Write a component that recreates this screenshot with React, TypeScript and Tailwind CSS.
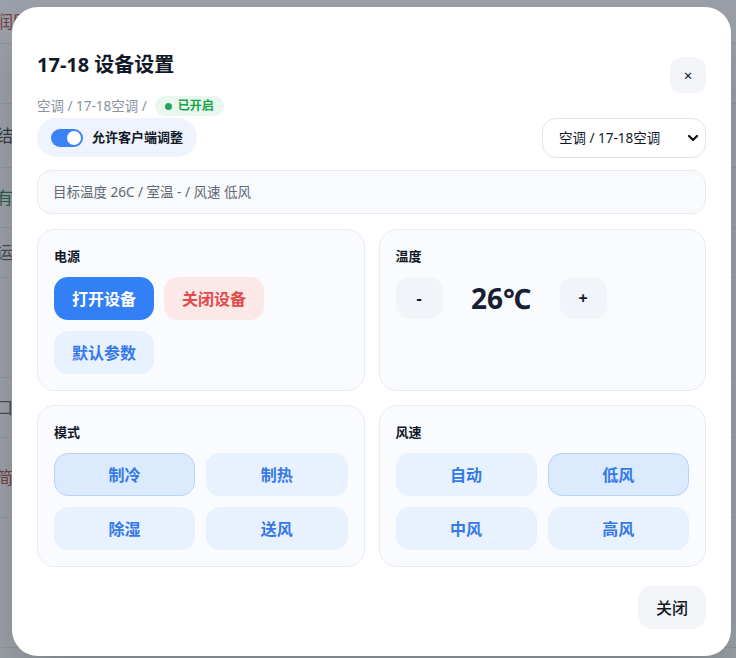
import React, { useState } from 'react';

const modes = ['制冷', '制热', '除湿', '送风'];
const speeds = ['自动', '低风', '中风', '高风'];

const bgRows = [
  { text: '润所', color: 'text-[#b23a3a]', h: 'h-[44px]' },
  { text: '', color: '', h: 'h-[60px]' },
  { text: '结果', color: 'text-[#333]', h: 'h-[64px]' },
  { text: '有人', color: 'text-[#1f7a4a]', h: 'h-[60px]' },
  { text: '运行', color: 'text-[#555]', h: 'h-[50px]' },
  { text: '', color: '', h: 'h-[100px]' },
  { text: '口容', color: 'text-[#555]', h: 'h-[60px]' },
  { text: '简', color: 'text-[#b23a3a]', h: 'h-[80px]' },
  { text: '', color: '', h: 'h-[130px]' },
];

const App: React.FC = () => {
  const [allowClient, setAllowClient] = useState(true);
  const [mode, setMode] = useState('制冷');
  const [speed, setSpeed] = useState('低风');
  const [temp, setTemp] = useState(26);

  return (
    <div className="relative w-[736px] h-[658px] overflow-hidden bg-white font-['Noto_Sans','Noto_Sans_CJK_SC',sans-serif]">
      {/* page behind the dialog */}
      <div className="flex flex-col">
        {bgRows.map((r, i) => (
          <div key={i} className={`${r.h} flex items-center border-b border-[#e5e7eb] -ml-[4px] text-[17px] ${r.color}`}>
            {r.text}
          </div>
        ))}
      </div>

      {/* overlay */}
      <div className="absolute inset-0 bg-[#374151]/50 pl-[12px] pt-[7px]">
        <div className="w-[719px] h-[649px] bg-white rounded-[26px] shadow-2xl px-[25px] pt-[44px] text-[#111827]">
          <div className="flex justify-between items-start">
            <div className="flex flex-col items-start">
              <h2 className="text-[20px] leading-7 font-bold">17-18 设备设置</h2>
              <div className="flex items-center gap-[8px] mt-[17px]">
                <span className="text-[13.5px] text-[#8a93a0]">空调 / 17-18空调 /</span>
                <span className="flex items-center gap-[6px] h-[20px] px-[10px] rounded-full bg-[#e9f7ee] text-[12px] font-bold text-[#16a34a]">
                  <span className="w-[7px] h-[7px] rounded-full bg-[#22a55a]"></span>
                  已开启
                </span>
              </div>
              <div className="mt-[2px] h-[39px] flex items-center gap-[9px] px-[14px] rounded-full bg-[#eef3fd] whitespace-nowrap">
                <button
                  onClick={() => setAllowClient(!allowClient)}
                  className={`w-[32px] h-[18px] rounded-full p-[2px] flex ${allowClient ? 'bg-[#3b82f6] justify-end' : 'bg-[#cbd5e1] justify-start'}`}
                >
                  <span className="w-[14px] h-[14px] rounded-full bg-white"></span>
                </button>
                <span className="text-[13px] font-bold text-[#111827]">允许客户端调整</span>
              </div>
            </div>
            <div className="flex flex-col items-end">
              <button className="mt-[6px] w-[36px] h-[36px] rounded-[12px] bg-[#f3f5f8] flex items-center justify-center text-[15px] text-[#111827]">
                ×
              </button>
              <div className="relative mt-[25px]">
                <select className="appearance-none w-[164px] h-[40px] rounded-[14px] border border-[#e1e5eb] bg-white pl-[16px] text-[13.5px] text-[#111827] outline-none">
                  <option>空调 / 17-18空调</option>
                </select>
                <svg className="absolute right-[7px] top-[15px] pointer-events-none" width="12" height="10" viewBox="0 0 12 10">
                  <path d="M2 3 L6 7 L10 3" fill="none" stroke="#111" strokeWidth="2.2" strokeLinecap="round" strokeLinejoin="round" />
                </svg>
              </div>
            </div>
          </div>

          <div className="mt-[12px] h-[44px] flex items-center px-[15px] rounded-[14px] border border-[#e8ecf2] bg-[#f8fafc] text-[13.5px] text-[#5f6875]">
            目标温度 {temp}C / 室温 - / 风速 {speed}
          </div>

          <div className="mt-[15px] grid grid-cols-2 gap-[14px]">
            {/* power */}
            <div className="h-[162px] rounded-[18px] border border-[#e6ebf1] bg-[#f9fbfe] p-4">
              <div className="text-[13px] leading-5 font-bold">电源</div>
              <div className="mt-[11px] flex flex-wrap gap-[10px] gap-y-[11px] w-[220px]">
                <button className="h-[43px] w-[100px] rounded-[14px] bg-[#3380f6] text-white text-[16px] font-bold">打开设备</button>
                <button className="h-[43px] w-[100px] rounded-[14px] bg-[#fde8e8] text-[#e14b4b] text-[16px] font-bold">关闭设备</button>
                <button className="h-[43px] w-[100px] rounded-[14px] bg-[#e8f1fe] text-[#3479e6] text-[16px] font-bold">默认参数</button>
              </div>
            </div>

            {/* temperature */}
            <div className="h-[162px] rounded-[18px] border border-[#e6ebf1] bg-[#f9fbfe] p-4">
              <div className="text-[13px] leading-5 font-bold">温度</div>
              <div className="mt-[11px] flex items-center gap-[12px]">
                <button onClick={() => setTemp(temp - 1)} className="w-[47px] h-[42px] rounded-[14px] bg-[#f1f4f8] text-[16px] font-bold">-</button>
                <span className="w-[93px] text-center text-[28px] font-bold text-[#172033]">{temp}℃</span>
                <button onClick={() => setTemp(temp + 1)} className="w-[47px] h-[42px] rounded-[14px] bg-[#f1f4f8] text-[16px] font-bold">+</button>
              </div>
            </div>

            {/* mode */}
            <div className="h-[162px] rounded-[18px] border border-[#e6ebf1] bg-[#f9fbfe] p-4">
              <div className="text-[13px] leading-5 font-bold">模式</div>
              <div className="mt-[11px] grid grid-cols-2 gap-[11px]">
                {modes.map((m) => (
                  <button
                    key={m}
                    onClick={() => setMode(m)}
                    className={`h-[43px] rounded-[14px] text-[16px] font-bold text-[#3479e6] border ${mode === m ? 'bg-[#dceafd] border-[#b9d2f5]' : 'bg-[#e8f1fe] border-transparent'}`}
                  >
                    {m}
                  </button>
                ))}
              </div>
            </div>

            {/* speed */}
            <div className="h-[162px] rounded-[18px] border border-[#e6ebf1] bg-[#f9fbfe] p-4">
              <div className="text-[13px] leading-5 font-bold">风速</div>
              <div className="mt-[11px] grid grid-cols-2 gap-[11px]">
                {speeds.map((s) => (
                  <button
                    key={s}
                    onClick={() => setSpeed(s)}
                    className={`h-[43px] rounded-[14px] text-[16px] font-bold text-[#3479e6] border ${speed === s ? 'bg-[#dceafd] border-[#b9d2f5]' : 'bg-[#e8f1fe] border-transparent'}`}
                  >
                    {s}
                  </button>
                ))}
              </div>
            </div>
          </div>

          <div className="mt-[19px] flex justify-end">
            <button className="h-[43px] w-[68px] rounded-[14px] bg-[#f3f5f8] text-[16px] font-medium text-[#111827]">关闭</button>
          </div>
        </div>
      </div>
    </div>
  );
};

export default App;
